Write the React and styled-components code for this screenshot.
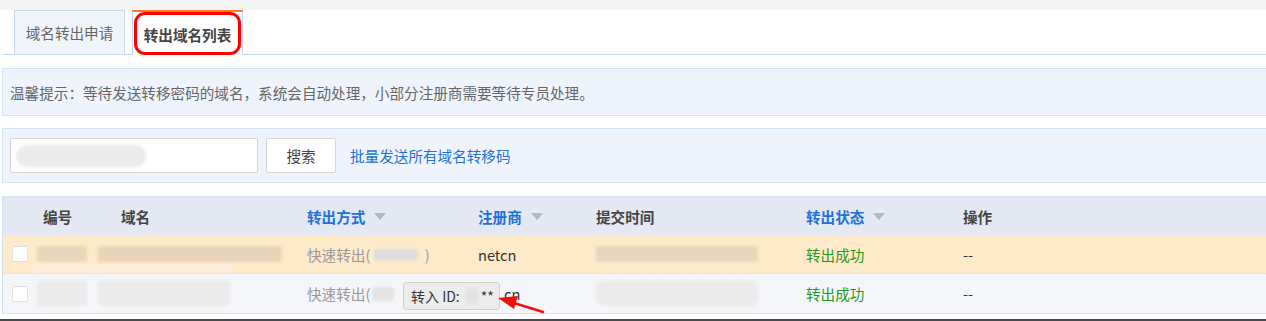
import styled, { createGlobalStyle } from "styled-components";

const GlobalStyle = createGlobalStyle`
  html, body {
    margin: 0;
    padding: 0;
    background: #fff;
    font-family: "Noto Sans CJK SC", "Noto Sans", sans-serif;
    font-size: 14.6px;
    color: #333;
  }
`;

const colors = {
  line: "#c4d9ef",
  boxBg: "#eff4fc",
  boxLine: "#d3e3f6",
  blue: "#1f72d6",
  green: "#1f9a1f",
  grey: "#999",
};

const Page = styled.div`
  width: 1266px;
  height: 321px;
  overflow: hidden;
`;

const TopStrip = styled.div`
  height: 10px;
  background: #f4f4f4;
`;

const TabBar = styled.div`
  display: flex;
  gap: 7px;
  margin-left: 2px;
  padding-left: 12px;
  height: 45px;
  border-bottom: 1px solid ${colors.line};
  box-sizing: border-box;
`;

const Tab = styled.div`
  position: relative;
  width: 111px;
  height: 45px;
  box-sizing: border-box;
  display: flex;
  align-items: center;
  justify-content: center;
  border: 1px solid ${colors.line};
  border-top: ${(p) => (p.$active ? "2px solid #ff7a1a" : `1px solid ${colors.line}`)};
  border-bottom: ${(p) => (p.$active ? "1px solid #fff" : `1px solid ${colors.line}`)};
  background: ${(p) => (p.$active ? "#fff" : "#f0f4fb")};
  color: ${(p) => (p.$active ? "#444" : "#666")};
  font-weight: ${(p) => (p.$active ? 700 : 400)};
  padding-top: ${(p) => (p.$active ? "2px" : "0")};
`;

const Marker = styled.div`
  position: absolute;
  left: 1px;
  right: 1px;
  top: 0px;
  bottom: -1px;
  border: 3.5px solid #f00;
  border-radius: 11px;
  pointer-events: none;
`;

const Box = styled.div`
  margin: ${(p) => p.$gap}px 0 0 2px;
  height: ${(p) => p.$h}px;
  box-sizing: border-box;
  border: 1px solid ${colors.boxLine};
  border-right: none;
  background: ${colors.boxBg};
  display: flex;
  align-items: center;
  padding-left: 7px;
  color: #666;
`;

const Input = styled.div`
  width: 248px;
  height: 35px;
  box-sizing: border-box;
  border: 1px solid #d6d6d6;
  border-radius: 2px;
  background: #fff;
  display: flex;
  align-items: center;
  padding-left: 5px;
`;

const Button = styled.div`
  margin-left: 8px;
  width: 70px;
  height: 35px;
  box-sizing: border-box;
  border: 1px solid #d6d6d6;
  border-radius: 2px;
  background: #fff;
  display: flex;
  align-items: center;
  justify-content: center;
  color: #444;
`;

const Link = styled.a`
  margin-left: 14px;
  color: ${colors.blue};
  text-decoration: none;
`;

const Blur = styled.span`
  display: inline-block;
  flex-shrink: 0;
  width: ${(p) => p.$w}px;
  height: ${(p) => p.$h}px;
  margin-left: ${(p) => p.$ml || 0}px;
  background: ${(p) => p.$c || "#e6e6e6"};
  border-radius: ${(p) => p.$r || 3}px;
  filter: blur(1.5px);
  vertical-align: middle;
`;

// the pale smear left under the blurred ids in the highlighted row
const Smear = styled.span`
  position: absolute;
  left: 30px;
  top: 28px;
  width: 200px;
  height: 10px;
  background: #fdecd8;
  filter: blur(1px);
`;

const Table = styled.div`
  margin: 13px 0 0 2px;
  border-left: 1px solid #cfe0f3;
  border-top: 1px solid #d6e4f5;
`;

const cols = "40px 78px 186px 171px 118px 210px 157px 1fr";

const HeadRow = styled.div`
  display: grid;
  grid-template-columns: ${cols};
  height: 38px;
  align-items: center;
  background: #e3e8f3;
  font-weight: 700;
  color: #444;
`;

const Row = styled.div`
  position: relative;
  display: grid;
  grid-template-columns: ${cols};
  height: ${(p) => p.$h}px;
  align-items: center;
  background: ${(p) => (p.$hl ? "#fee9c9" : "#f5f6f9")};
  border-bottom: ${(p) => (p.$hl ? "1px dashed #e2e2e2" : "1px solid #e4e4e4")};
`;

const HeadCell = styled.div`
  display: flex;
  align-items: center;
  color: ${(p) => (p.$sort ? colors.blue : "#444")};
`;

const Caret = styled.span`
  margin-left: 9px;
  width: 0;
  height: 0;
  border-left: 6px solid transparent;
  border-right: 6px solid transparent;
  border-top: 7px solid #b5b9c0;
`;

const Cell = styled.div`
  display: flex;
  align-items: center;
  white-space: nowrap;
  padding-left: ${(p) => p.$pl || 0}px;
  color: ${(p) => p.$color || "#333"};
`;

const Check = styled.span`
  margin-left: 9px;
  width: 14px;
  height: 14px;
  border: 1px solid #e0e0e0;
  border-radius: 2px;
  background: #fff;
`;

const Tip = styled.div`
  position: absolute;
  left: 400px;
  top: 8px;
  width: 97px;
  height: 28px;
  box-sizing: border-box;
  border: 1px solid #d2d2d2;
  border-radius: 3px;
  background: #ececec;
  display: flex;
  align-items: center;
  padding-left: 7px;
  white-space: nowrap;
  color: #333;
  font-size: 14px;
`;

const Stars = styled.span`
  margin-left: 3px;
`;

const Arrow = styled.svg`
  position: absolute;
  left: 492px;
  top: 14px;
`;

const BottomBar = styled.div`
  margin-top: 5px;
  height: 4px;
  background: #4a4a4a;
`;

function SortHead({ children }) {
  return (
    <HeadCell $sort>
      {children}
      <Caret />
    </HeadCell>
  );
}

export default function App() {
  return (
    <Page>
      <GlobalStyle />
      <TopStrip />
      <TabBar>
        <Tab>域名转出申请</Tab>
        <Tab $active>
          转出域名列表
          <Marker />
        </Tab>
      </TabBar>

      <Box $gap={13} $h={48}>
        温馨提示：等待发送转移密码的域名，系统会自动处理，小部分注册商需要等待专员处理。
      </Box>

      <Box $gap={12} $h={55}>
        <Input>
          <Blur $w={130} $h={22} $r={11} $c="#ebebeb" />
        </Input>
        <Button>搜索</Button>
        <Link href="#">批量发送所有域名转移码</Link>
      </Box>

      <Table>
        <HeadRow>
          <HeadCell />
          <HeadCell>编号</HeadCell>
          <HeadCell>域名</HeadCell>
          <SortHead>转出方式</SortHead>
          <SortHead>注册商</SortHead>
          <HeadCell>提交时间</HeadCell>
          <SortHead>转出状态</SortHead>
          <HeadCell>操作</HeadCell>
        </HeadRow>

        <Row $hl $h={38}>
          <Smear />
          <Cell>
            <Check />
          </Cell>
          <Cell>
            <Blur $w={50} $h={16} $ml={-6} $c="#e9d5ba" />
          </Cell>
          <Cell>
            <Blur $w={184} $h={16} $ml={-23} $c="#e8d3b8" />
          </Cell>
          <Cell $color={colors.grey}>
            快速转出(
            <Blur $w={44} $h={11} $ml={4} $c="#dedcdc" />
            &nbsp;&nbsp;)
          </Cell>
          <Cell>netcn</Cell>
          <Cell>
            <Blur $w={162} $h={16} $c="#e9d5bb" />
          </Cell>
          <Cell $color={colors.green}>转出成功</Cell>
          <Cell>--</Cell>
        </Row>

        <Row $h={39}>
          <Cell>
            <Check />
          </Cell>
          <Cell>
            <Blur $w={50} $h={25} $ml={-6} $c="#ebebeb" />
          </Cell>
          <Cell>
            <Blur $w={132} $h={25} $ml={-23} $c="#ebebeb" />
          </Cell>
          <Cell $color={colors.grey}>
            快速转出(
            <Blur $w={22} $h={14} $ml={2} $c="#e3e3e3" />
          </Cell>
          <Cell $pl={26}>cn</Cell>
          <Cell>
            <Blur $w={162} $h={25} $r={8} $c="#ebebeb" />
          </Cell>
          <Cell $color={colors.green}>转出成功</Cell>
          <Cell>--</Cell>
          <Tip>
            转入 ID:
            <Blur $w={12} $h={18} $ml={6} $r={6} $c="#e2e2e2" />
            <Stars>**</Stars>
          </Tip>
          <Arrow width="52" height="26" viewBox="0 0 52 26">
            <path d="M19 15 L48 24" stroke="#f01010" strokeWidth="2.6" strokeLinecap="round" />
            <path d="M3 10 L23 8 L19 21 Z" fill="#f01010" />
          </Arrow>
        </Row>
      </Table>
      <BottomBar />
    </Page>
  );
}
